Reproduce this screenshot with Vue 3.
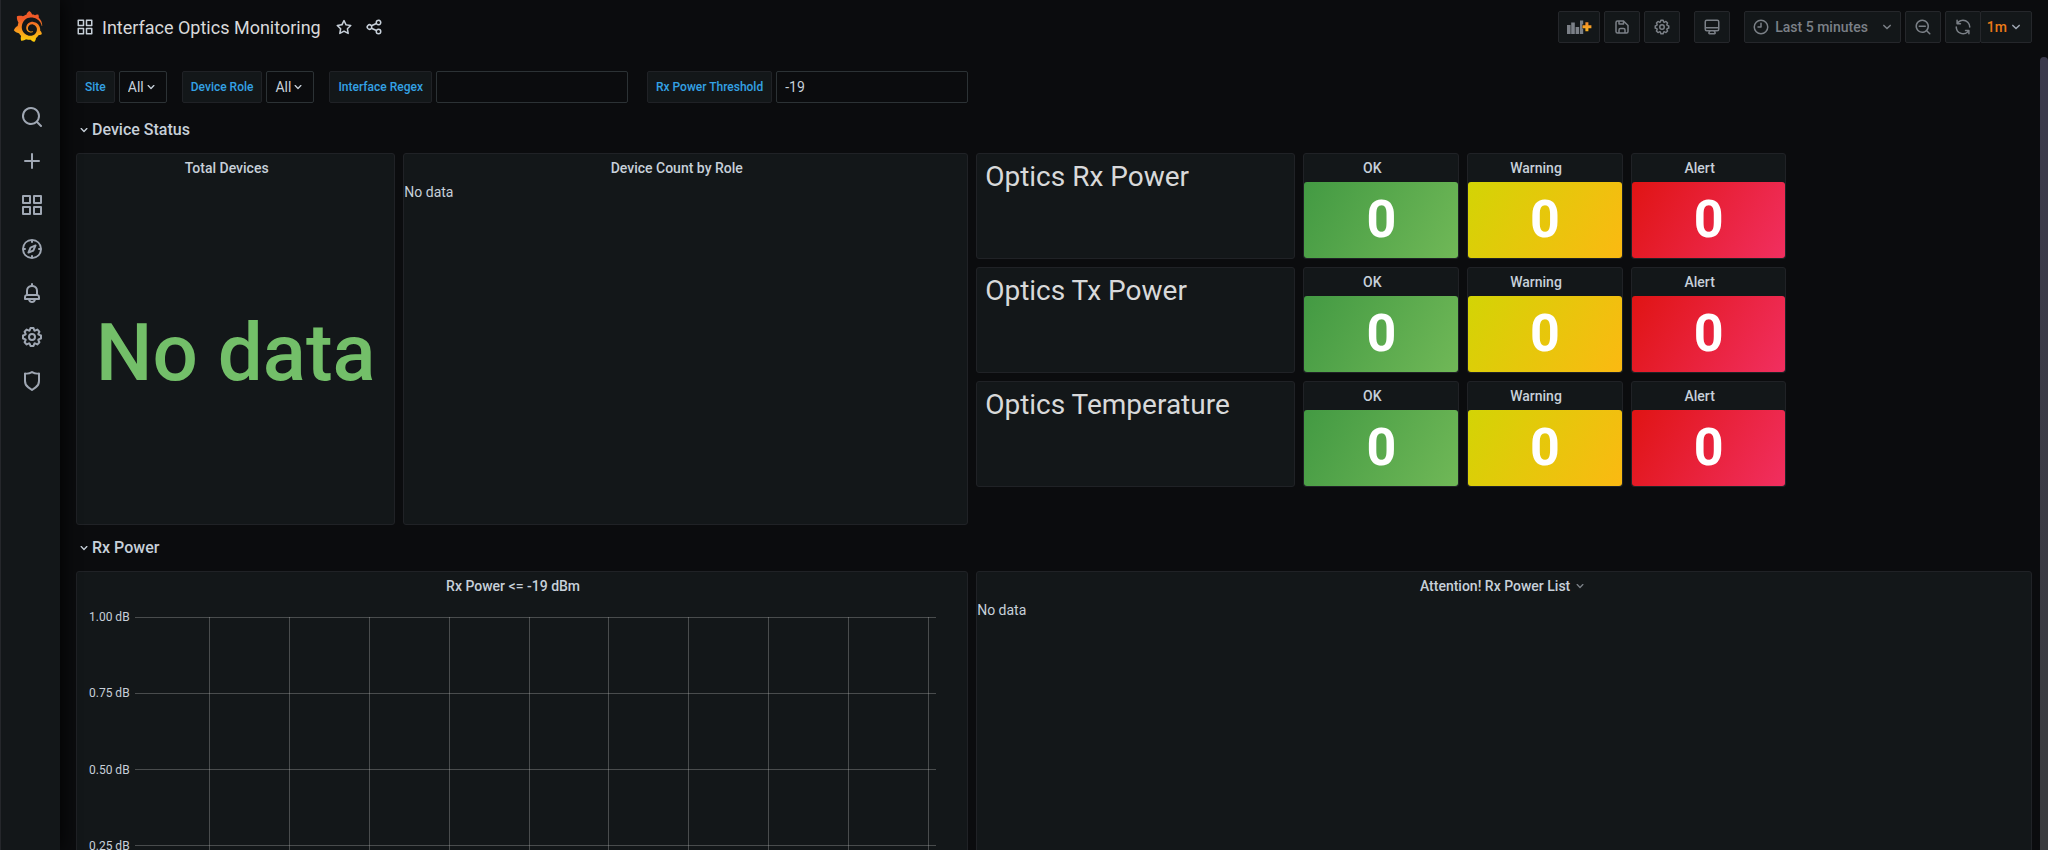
<script setup>
import { ref } from 'vue'

const icons = {
  search: 'M21.71,20.29,18,16.61A9,9,0,1,0,16.61,18l3.68,3.68a1,1,0,0,0,1.42,0A1,1,0,0,0,21.71,20.29ZM11,18a7,7,0,1,1,7-7A7,7,0,0,1,11,18Z',
  searchMinus: 'M21.71,20.29,18,16.61A9,9,0,1,0,16.61,18l3.68,3.68a1,1,0,0,0,1.42,0A1,1,0,0,0,21.71,20.29ZM11,18a7,7,0,1,1,7-7A7,7,0,0,1,11,18Zm4-8H7a1,1,0,0,0,0,2h8a1,1,0,0,0,0-2Z',
  plus: 'M19,11H13V5a1,1,0,0,0-2,0v6H5a1,1,0,0,0,0,2h6v6a1,1,0,0,0,2,0V13h6a1,1,0,0,0,0-2Z',
  apps: 'M10,13H3a1,1,0,0,0-1,1v7a1,1,0,0,0,1,1h7a1,1,0,0,0,1-1V14A1,1,0,0,0,10,13ZM9,20H4V15H9ZM21,2H14a1,1,0,0,0-1,1v7a1,1,0,0,0,1,1h7a1,1,0,0,0,1-1V3A1,1,0,0,0,21,2ZM20,9H15V4h5Zm1,4H14a1,1,0,0,0-1,1v7a1,1,0,0,0,1,1h7a1,1,0,0,0,1-1V14A1,1,0,0,0,21,13Zm-1,7H15V15h5ZM10,2H3A1,1,0,0,0,2,3v7a1,1,0,0,0,1,1h7a1,1,0,0,0,1-1V3A1,1,0,0,0,10,2ZM9,9H4V4H9Z',
  compass: 'M12,2A10,10,0,1,0,22,12,10,10,0,0,0,12,2Zm1,17.93V19a1,1,0,0,0-2,0v.93A8,8,0,0,1,4.07,13H5a1,1,0,0,0,0-2H4.07A8,8,0,0,1,11,4.07V5a1,1,0,0,0,2,0V4.07A8,8,0,0,1,19.93,11H19a1,1,0,0,0,0,2h.93A8,8,0,0,1,13,19.93ZM15.14,7.55l-5,2.12a1,1,0,0,0-.52.52l-2.12,5a1,1,0,0,0,.21,1.1,1,1,0,0,0,.7.3.93.93,0,0,0,.4-.09l5-2.12a1,1,0,0,0,.52-.52l2.12-5a1,1,0,0,0-1.31-1.31Zm-2.49,5.1-2.28,1,1-2.28,2.28-1Z',
  bell: 'M18,13.18V10a6,6,0,0,0-5-5.91V3a1,1,0,0,0-2,0V4.09A6,6,0,0,0,6,10v3.18A3,3,0,0,0,4,16v2a1,1,0,0,0,1,1H8.14a4,4,0,0,0,7.72,0H19a1,1,0,0,0,1-1V16A3,3,0,0,0,18,13.18ZM8,10a4,4,0,0,1,8,0v3H8Zm4,10a2,2,0,0,1-1.72-1h3.44A2,2,0,0,1,12,20Zm6-3H6V16a1,1,0,0,1,1-1H17a1,1,0,0,1,1,1Z',
  cog: 'M21.32,9.55l-1.89-.63.89-1.78A1,1,0,0,0,20.13,6L18,3.87a1,1,0,0,0-1.15-.19l-1.78.89-.63-1.89A1,1,0,0,0,13.5,2h-3a1,1,0,0,0-.95.68L8.92,4.57,7.14,3.68A1,1,0,0,0,6,3.87L3.87,6a1,1,0,0,0-.19,1.15l.89,1.78-1.89.63A1,1,0,0,0,2,10.5v3a1,1,0,0,0,.68.95l1.89.63-.89,1.78A1,1,0,0,0,3.87,18L6,20.13a1,1,0,0,0,1.15.19l1.78-.89.63,1.89a1,1,0,0,0,.95.68h3a1,1,0,0,0,.95-.68l.63-1.89,1.78.89A1,1,0,0,0,18,20.13L20.13,18a1,1,0,0,0,.19-1.15l-.89-1.78,1.89-.63A1,1,0,0,0,22,13.5v-3A1,1,0,0,0,21.32,9.55ZM20,12.78l-1.2.4A2,2,0,0,0,17.64,16l.57,1.14-1.1,1.1L16,17.64a2,2,0,0,0-2.79,1.16l-.4,1.2H11.22l-.4-1.2A2,2,0,0,0,8,17.64l-1.14.57-1.1-1.1L6.36,16A2,2,0,0,0,5.2,13.18L4,12.78V11.22l1.2-.4A2,2,0,0,0,6.36,8L5.79,6.89l1.1-1.1L8,6.36A2,2,0,0,0,10.82,5.2l.4-1.2h1.56l.4,1.2A2,2,0,0,0,16,6.36l1.14-.57,1.1,1.1L17.64,8a2,2,0,0,0,1.16,2.79l1.2.4ZM12,8a4,4,0,1,0,4,4A4,4,0,0,0,12,8Zm0,6a2,2,0,1,1,2-2A2,2,0,0,1,12,14Z',
  shield: 'M19.63,3.65a1,1,0,0,0-.84-.2,8,8,0,0,1-6.22-1.27,1,1,0,0,0-1.14,0A8,8,0,0,1,5.21,3.45a1,1,0,0,0-.84.2A1,1,0,0,0,4,4.43v7.45a9,9,0,0,0,3.77,7.33l3.65,2.6a1,1,0,0,0,1.16,0l3.65-2.6A9,9,0,0,0,20,11.88V4.43A1,1,0,0,0,19.63,3.65ZM18,11.88a7,7,0,0,1-2.93,5.7L12,19.77,8.93,17.58A7,7,0,0,1,6,11.88V5.58a10,10,0,0,0,6-1.39,10,10,0,0,0,6,1.39Z',
  star: 'M22,9.67A1,1,0,0,0,21.14,9l-5.69-.83L12.9,3a1,1,0,0,0-1.8,0L8.55,8.16,2.86,9a1,1,0,0,0-.81.68,1,1,0,0,0,.25,1l4.13,4-1,5.68A1,1,0,0,0,6.9,21.44L12,18.77l5.1,2.67a.93.93,0,0,0,.46.12,1,1,0,0,0,.59-.19,1,1,0,0,0,.4-1l-1-5.68,4.13-4A1,1,0,0,0,22,9.67Zm-6.15,4a1,1,0,0,0-.29.88l.72,4.2-3.76-2a1.06,1.06,0,0,0-.94,0l-3.76,2,.72-4.2a1,1,0,0,0-.29-.88l-3-3,4.21-.61a1,1,0,0,0,.76-.55L12,5.7l1.88,3.82a1,1,0,0,0,.76.55l4.21.61Z',
  share: 'M18,14a4,4,0,0,0-3.08,1.48l-5.1-2.35a3.64,3.64,0,0,0,0-2.26l5.1-2.35A4,4,0,1,0,14,6a4.17,4.17,0,0,0,.07.71L8.79,9.14a4,4,0,1,0,0,5.72l5.28,2.43A4.17,4.17,0,0,0,14,18a4,4,0,1,0,4-4ZM18,4a2,2,0,1,1-2,2A2,2,0,0,1,18,4ZM6,14a2,2,0,1,1,2-2A2,2,0,0,1,6,14Zm12,6a2,2,0,1,1,2-2A2,2,0,0,1,18,20Z',
  save: 'M20.71,9.29l-6-6a1,1,0,0,0-.32-.21A1.09,1.09,0,0,0,14,3H6A3,3,0,0,0,3,6V18a3,3,0,0,0,3,3H18a3,3,0,0,0,3-3V10A1,1,0,0,0,20.71,9.29ZM9,5h4V7H9Zm6,14H9V16a1,1,0,0,1,1-1h4a1,1,0,0,1,1,1Zm4-1a1,1,0,0,1-1,1H17V16a3,3,0,0,0-3-3H10a3,3,0,0,0-3,3v3H6a1,1,0,0,1-1-1V6A1,1,0,0,1,6,5H7V8A1,1,0,0,0,8,9h6a1,1,0,0,0,1-1V6.41l4,4Z',
  monitor: 'M19,2H5A3,3,0,0,0,2,5V15a3,3,0,0,0,3,3H7.64l-.58,1a2,2,0,0,0,0,2,2,2,0,0,0,1.75,1h6.46A2,2,0,0,0,17,21a2,2,0,0,0,0-2l-.59-1H19a3,3,0,0,0,3-3V5A3,3,0,0,0,19,2ZM8.77,20,10,18H14l1.2,2ZM20,15a1,1,0,0,1-1,1H5a1,1,0,0,1-1-1V14H20Zm0-3H4V5A1,1,0,0,1,5,4H19a1,1,0,0,1,1,1Z',
  clock: 'M12,2A10,10,0,1,0,22,12,10,10,0,0,0,12,2Zm0,18a8,8,0,1,1,8-8A8,8,0,0,1,12,20ZM12,6a1,1,0,0,0-1,1v4H8a1,1,0,0,0,0,2h4a1,1,0,0,0,1-1V7A1,1,0,0,0,12,6Z',
  sync: 'M19.91,15.51H15.38a1,1,0,0,0,0,2h2.4A8,8,0,0,1,4,12a1,1,0,0,0-2,0,10,10,0,0,0,16.88,7.23V21a1,1,0,0,0,2,0V16.5A1,1,0,0,0,19.91,15.51ZM12,2A10,10,0,0,0,5.12,4.77V3a1,1,0,0,0-2,0V7.5a1,1,0,0,0,1,1h4.5a1,1,0,0,0,0-2H6.22A8,8,0,0,1,20,12a1,1,0,0,0,2,0A10,10,0,0,0,12,2Z',
  angle: 'M17,9.17a1,1,0,0,0-1.41,0L12,12.71,8.46,9.17a1,1,0,0,0-1.41,0,1,1,0,0,0,0,1.42l4.24,4.24a1,1,0,0,0,1.42,0L17,10.59A1,1,0,0,0,17,9.17Z',
}

const nav = [
  { icon: 'search', label: 'Search' },
  { icon: 'plus', label: 'Create' },
  { icon: 'apps', label: 'Dashboards' },
  { icon: 'compass', label: 'Explore' },
  { icon: 'bell', label: 'Alerting' },
  { icon: 'cog', label: 'Configuration' },
  { icon: 'shield', label: 'Server Admin' },
]

const site = ref('All')
const role = ref('All')
const regex = ref('')
const threshold = ref('-19')

const optics = ['Optics Rx Power', 'Optics Tx Power', 'Optics Temperature']
const stats = [
  { title: 'OK', tone: 'ok' },
  { title: 'Warning', tone: 'warning' },
  { title: 'Alert', tone: 'alert' },
]

const yTicks = ['1.00 dB', '0.75 dB', '0.50 dB', '0.25 dB', '0 dB']
const xTicks = Array.from({ length: 10 }, (_, i) => `${9.3 + i * 9.98}%`)
</script>

<template>
  <div class="app">
    <aside class="sidebar">
      <a class="logo" href="#" aria-label="Home">
        <svg viewBox="0 0 351 365" aria-hidden="true">
          <defs>
            <linearGradient id="flame" gradientUnits="userSpaceOnUse" x1="175" y1="365" x2="175" y2="0">
              <stop offset="0.05" stop-color="#fbca0a" />
              <stop offset="0.3" stop-color="#f9a41b" />
              <stop offset="0.75" stop-color="#f05a28" />
              <stop offset="1" stop-color="#f05a28" />
            </linearGradient>
          </defs>
          <path fill="url(#flame)" d="M342,161.2c-0.6-6.1-1.6-13.1-3.6-20.9c-2-7.7-5-16.2-9.4-25c-4.4-8.8-10.1-17.9-17.5-26.8c-2.9-3.5-6.1-6.9-9.5-10.2c5.1-20.3-6.2-37.9-6.2-37.9c-19.5-1.2-31.9,6.1-36.5,9.4c-0.8-0.3-1.5-0.7-2.3-1c-3.3-1.3-6.7-2.6-10.3-3.7c-3.5-1.1-7.1-2.1-10.8-3c-3.7-0.9-7.4-1.6-11.2-2.2c-0.7-0.1-1.3-0.2-2-0.3c-8.5-27.2-32.9-38.6-32.9-38.6c-27.3,17.3-32.4,41.5-32.4,41.5s-0.1,0.5-0.3,1.4c-1.5,0.4-3,0.9-4.5,1.3c-2.1,0.6-4.2,1.4-6.2,2.2c-2.1,0.8-4.1,1.6-6.2,2.5c-4.1,1.8-8.2,3.8-12.2,6c-3.9,2.2-7.7,4.6-11.4,7.1c-0.5-0.2-1-0.4-1-0.4c-37.8-14.4-71.3,2.9-71.3,2.9c-3.1,40.2,15.1,65.5,18.7,70.1c-0.9,2.5-1.7,5-2.5,7.5c-2.8,9.1-4.9,18.4-6.2,28.1c-0.2,1.4-0.4,2.8-0.5,4.2C18.8,192.7,8.5,228,8.5,228c29.1,33.5,63.1,35.6,63.1,35.6c0,0,0.1-0.1,0.1-0.1c4.3,7.7,9.3,15,14.9,21.9c2.4,2.9,4.8,5.6,7.4,8.3c-10.6,30.4,1.5,55.6,1.5,55.6c32.4,1.2,53.7-14.2,58.2-17.7c3.2,1.1,6.5,2.1,9.8,2.9c10,2.6,20.2,4.1,30.4,4.5c2.5,0.1,5.1,0.2,7.6,0.1l1.2,0l0.8,0l1.6,0l1.6-0.1l0,0.1c15.3,21.8,42.1,24.9,42.1,24.9c19.1-20.1,20.2-40.1,20.2-44.4l0,0c0,0,0-0.1,0-0.3c0-0.4,0-0.6,0-0.6l0,0c0-0.3,0-0.6,0-0.9c4-2.8,7.8-5.8,11.4-9.1c7.6-6.9,14.3-14.8,19.9-23.3c0.5-0.8,1-1.6,1.5-2.4c21.6,1.2,36.9-13.4,36.9-13.4c-3.6-22.5-16.4-33.5-19.1-35.6l0,0c0,0-0.1-0.1-0.3-0.2c-0.2-0.1-0.2-0.2-0.2-0.2c0,0,0,0,0,0c-0.1-0.1-0.3-0.2-0.5-0.3c0.1-1.4,0.2-2.7,0.3-4.1c0.2-2.4,0.2-4.9,0.2-7.3l0-1.8l0-0.9l0-0.5c0-0.6,0-0.4,0-0.6l-0.1-1.5l-0.1-2c0-0.7-0.1-1.3-0.2-1.9c-0.1-0.6-0.1-1.3-0.2-1.9l-0.2-1.9l-0.3-1.9c-0.4-2.5-0.8-4.9-1.4-7.4c-2.3-9.7-6.1-18.9-11-27.2c-5-8.3-11.2-15.6-18.3-21.8c-7-6.2-14.9-11.2-23.1-14.9c-8.3-3.7-16.9-6.1-25.5-7.2c-4.3-0.6-8.6-0.8-12.9-0.7l-1.6,0l-0.4,0c-0.1,0-0.6,0-0.5,0l-0.7,0l-1.6,0.1c-0.6,0-1.2,0.1-1.7,0.1c-2.2,0.2-4.4,0.5-6.5,0.9c-8.6,1.6-16.7,4.7-23.8,9c-7.1,4.3-13.3,9.6-18.3,15.6c-5,6-8.9,12.7-11.6,19.6c-2.7,6.9-4.2,14.1-4.6,21c-0.1,1.7-0.1,3.5-0.1,5.2c0,0.4,0,0.9,0,1.3l0.1,1.4c0.1,0.8,0.1,1.7,0.2,2.5c0.3,3.5,1,6.9,1.9,10.1c1.9,6.5,4.9,12.4,8.6,17.4c3.7,5,8.2,9.1,12.9,12.4c4.7,3.2,9.8,5.5,14.8,7c5,1.5,10,2.1,14.7,2.1c0.6,0,1.2,0,1.7,0c0.3,0,0.6,0,0.9,0c0.3,0,0.6,0,0.9-0.1c0.5,0,1-0.1,1.5-0.1c0.1,0,0.3,0,0.4-0.1l0.5-0.1c0.3,0,0.6-0.1,0.9-0.1c0.6-0.1,1.1-0.2,1.7-0.3c0.6-0.1,1.1-0.2,1.6-0.4c1.1-0.2,2.1-0.6,3.1-0.9c2-0.7,4-1.5,5.7-2.4c1.8-0.9,3.4-2,5-3c0.4-0.3,0.9-0.6,1.3-1c1.6-1.3,1.9-3.7,0.6-5.3c-1.1-1.4-3.1-1.8-4.7-0.9c-0.4,0.2-0.8,0.4-1.2,0.6c-1.4,0.7-2.8,1.3-4.3,1.8c-1.5,0.5-3.1,0.9-4.7,1.2c-0.8,0.1-1.6,0.2-2.5,0.3c-0.4,0-0.8,0.1-1.3,0.1c-0.4,0-0.9,0-1.2,0c-0.4,0-0.8,0-1.2,0c-0.5,0-1,0-1.5-0.1c0,0-0.3,0-0.1,0l-0.2,0l-0.3,0c-0.2,0-0.5,0-0.7-0.1c-0.5-0.1-0.9-0.1-1.4-0.2c-3.7-0.5-7.4-1.6-10.9-3.2c-3.6-1.6-7-3.8-10.1-6.6c-3.1-2.8-5.8-6.1-7.9-9.9c-2.1-3.8-3.6-8-4.3-12.4c-0.3-2.2-0.5-4.5-0.4-6.7c0-0.6,0.1-1.2,0.1-1.8c0,0.2,0-0.1,0-0.1l0-0.2l0-0.5c0-0.3,0.1-0.6,0.1-0.9c0.1-1.2,0.3-2.4,0.5-3.6c1.7-9.6,6.5-19,13.9-26.1c1.9-1.8,3.9-3.4,6-4.9c2.1-1.5,4.4-2.8,6.8-3.9c2.4-1.1,4.8-2,7.4-2.7c2.5-0.7,5.1-1.1,7.8-1.4c1.3-0.1,2.6-0.2,4-0.2c0.4,0,0.6,0,0.9,0l1.1,0l0.7,0c0.3,0,0,0,0.1,0l0.3,0l1.1,0.1c2.9,0.2,5.7,0.6,8.5,1.3c5.6,1.2,11.1,3.3,16.2,6.1c10.2,5.7,18.9,14.5,24.2,25.1c2.7,5.3,4.6,11,5.5,16.9c0.2,1.5,0.4,3,0.5,4.5l0.1,1.1l0.1,1.1c0,0.4,0,0.8,0,1.1c0,0.4,0,0.8,0,1.1l0,1l0,1.1c0,0.7-0.1,1.9-0.1,2.6c-0.1,1.6-0.3,3.3-0.5,4.9c-0.2,1.6-0.5,3.2-0.8,4.8c-0.3,1.6-0.7,3.2-1.1,4.7c-0.8,3.1-1.8,6.2-3,9.3c-2.4,6-5.6,11.8-9.4,17.1c-7.7,10.6-18.2,19.2-30.2,24.7c-6,2.7-12.3,4.7-18.8,5.7c-3.2,0.6-6.5,0.9-9.8,1l-0.6,0l-0.5,0l-1.1,0l-1.6,0l-0.8,0c0.4,0-0.1,0-0.1,0l-0.3,0c-1.8,0-3.5-0.1-5.3-0.3c-7-0.5-13.9-1.8-20.7-3.7c-6.7-1.9-13.2-4.6-19.4-7.8c-12.3-6.6-23.4-15.6-32-26.5c-4.3-5.4-8.1-11.3-11.2-17.4c-3.1-6.1-5.6-12.6-7.4-19.1c-1.8-6.6-2.9-13.3-3.4-20.1l-0.1-1.3l0-0.3l0-0.3l0-0.6l0-1.1l0-0.3l0-0.4l0-0.8l0-1.6l0-0.3c0,0,0,0.1,0-0.1l0-0.6c0-0.8,0-1.7,0-2.5c0.1-3.3,0.4-6.8,0.8-10.2c0.4-3.4,1-6.9,1.7-10.3c0.7-3.4,1.5-6.8,2.5-10.2c1.9-6.7,4.3-13.2,7.1-19.3c5.7-12.2,13.1-23.1,22-31.8c2.2-2.2,4.5-4.2,6.9-6.2c2.4-1.9,4.9-3.7,7.5-5.4c2.5-1.7,5.2-3.2,7.9-4.6c1.3-0.7,2.7-1.4,4.1-2c0.7-0.3,1.4-0.6,2.1-0.9c0.7-0.3,1.4-0.6,2.1-0.9c2.8-1.2,5.7-2.2,8.7-3.1c0.7-0.2,1.5-0.4,2.2-0.7c0.7-0.2,1.5-0.4,2.2-0.6c1.5-0.4,3-0.8,4.5-1.1c0.7-0.2,1.5-0.3,2.3-0.5c0.8-0.2,1.5-0.3,2.3-0.5c0.8-0.1,1.5-0.3,2.3-0.4l1.1-0.2l1.2-0.2c0.8-0.1,1.5-0.2,2.3-0.3c0.9-0.1,1.7-0.2,2.6-0.3c0.7-0.1,1.9-0.2,2.6-0.3c0.5-0.1,1.1-0.1,1.6-0.2l1.1-0.1l0.5-0.1l0.6,0c0.9-0.1,1.7-0.1,2.6-0.2l1.3-0.1c0,0,0.5,0,0.1,0l0.3,0l0.6,0c0.7,0,1.5-0.1,2.2-0.1c2.9-0.1,5.9-0.1,8.8,0c5.8,0.2,11.5,0.9,17,1.9c11.1,2.1,21.5,5.6,31,10.3c9.5,4.6,17.9,10.3,25.3,16.5c0.5,0.4,0.9,0.8,1.4,1.2c0.4,0.4,0.9,0.8,1.3,1.2c0.9,0.8,1.7,1.6,2.6,2.4c0.9,0.8,1.7,1.6,2.5,2.4c0.8,0.8,1.6,1.6,2.4,2.5c3.1,3.3,6,6.6,8.6,10c5.2,6.7,9.4,13.5,12.7,19.9c0.2,0.4,0.4,0.8,0.6,1.2c0.2,0.4,0.4,0.8,0.6,1.2c0.4,0.8,0.8,1.6,1.1,2.4c0.4,0.8,0.7,1.5,1.1,2.3c0.3,0.8,0.7,1.5,1,2.3c1.2,3,2.4,5.9,3.3,8.6c1.5,4.4,2.6,8.3,3.5,11.7c0.3,1.4,1.6,2.3,3,2.1c1.5-0.1,2.6-1.3,2.6-2.8C342.6,170.4,342.5,166.1,342,161.2z" />
        </svg>
      </a>
      <nav class="nav" aria-label="Main">
        <a v-for="item in nav" :key="item.icon" class="nav-link" href="#" :aria-label="item.label">
          <svg class="icon icon-lg" viewBox="0 0 24 24" aria-hidden="true"><path :d="icons[item.icon]" /></svg>
        </a>
      </nav>
    </aside>

    <main class="main">
      <header class="toolbar">
        <svg class="icon icon-md bright" viewBox="0 0 24 24" aria-hidden="true"><path :d="icons.apps" /></svg>
        <h1 class="title">Interface Optics Monitoring</h1>
        <button class="plain" type="button" aria-label="Mark as favorite">
          <svg class="icon icon-md bright" viewBox="0 0 24 24" aria-hidden="true"><path :d="icons.star" /></svg>
        </button>
        <button class="plain" type="button" aria-label="Share dashboard">
          <svg class="icon icon-md bright" viewBox="0 0 24 24" aria-hidden="true"><path :d="icons.share" /></svg>
        </button>

        <div class="actions">
          <div class="group">
            <button class="btn" type="button" aria-label="Add panel">
              <svg class="add-panel" viewBox="0 0 24 14" aria-hidden="true">
                <defs>
                  <linearGradient id="amber" x1="0" y1="0" x2="0" y2="1">
                    <stop offset="0" stop-color="#f2882c" />
                    <stop offset="1" stop-color="#fbb51f" />
                  </linearGradient>
                </defs>
                <path class="bars" d="M0 5h3.6v9H0zM4.2 2.6h3.6V14H4.2zM8.6 7h3.6v7H8.6zM13 .4h3.2V14H13z" />
                <path class="halo" d="M18 1.6h4v3h2.6v4H22v3h-4v-3h-3v-4h3z" />
                <path fill="url(#amber)" d="M18.4 2.2h3v3h3v3h-3v3h-3v-3h-3v-3h3z" />
              </svg>
            </button>
            <button class="btn" type="button" aria-label="Save dashboard">
              <svg class="icon icon-md" viewBox="0 0 24 24" aria-hidden="true"><path :d="icons.save" /></svg>
            </button>
            <button class="btn" type="button" aria-label="Dashboard settings">
              <svg class="icon icon-md" viewBox="0 0 24 24" aria-hidden="true"><path :d="icons.cog" /></svg>
            </button>
          </div>
          <button class="btn" type="button" aria-label="Cycle view mode">
            <svg class="icon icon-md" viewBox="0 0 24 24" aria-hidden="true"><path :d="icons.monitor" /></svg>
          </button>
          <div class="group">
            <button class="btn time" type="button">
              <svg class="icon icon-md" viewBox="0 0 24 24" aria-hidden="true"><path :d="icons.clock" /></svg>
              <span class="time-text">Last 5 minutes</span>
              <svg class="icon icon-md" viewBox="0 0 24 24" aria-hidden="true"><path :d="icons.angle" /></svg>
            </button>
            <button class="btn" type="button" aria-label="Zoom out time range">
              <svg class="icon icon-md" viewBox="0 0 24 24" aria-hidden="true"><path :d="icons.searchMinus" /></svg>
            </button>
            <div class="joined">
              <button class="btn" type="button" aria-label="Refresh dashboard">
                <svg class="icon icon-md" viewBox="0 0 24 24" aria-hidden="true"><path :d="icons.sync" /></svg>
              </button>
              <button class="btn interval" type="button">
                1m
                <svg class="icon icon-md" viewBox="0 0 24 24" aria-hidden="true"><path :d="icons.angle" /></svg>
              </button>
            </div>
          </div>
        </div>
      </header>

      <form class="filters" @submit.prevent>
        <div class="filter">
          <label class="filter-label" for="var-site">Site</label>
          <span class="select">
            <select id="var-site" v-model="site"><option>All</option></select>
            <svg class="icon icon-sm" viewBox="0 0 24 24" aria-hidden="true"><path :d="icons.angle" /></svg>
          </span>
        </div>
        <div class="filter">
          <label class="filter-label" for="var-role">Device Role</label>
          <span class="select">
            <select id="var-role" v-model="role"><option>All</option></select>
            <svg class="icon icon-sm" viewBox="0 0 24 24" aria-hidden="true"><path :d="icons.angle" /></svg>
          </span>
        </div>
        <div class="filter wide">
          <label class="filter-label" for="var-regex">Interface Regex</label>
          <input id="var-regex" v-model="regex" class="field" type="text" />
        </div>
        <div class="filter wide">
          <label class="filter-label" for="var-threshold">Rx Power Threshold</label>
          <input id="var-threshold" v-model="threshold" class="field" type="text" />
        </div>
      </form>

      <div class="dashboard">
        <button class="row-title" type="button">
          <svg class="icon icon-sm" viewBox="0 0 24 24" aria-hidden="true"><path :d="icons.angle" /></svg>
          Device Status
        </button>

        <section class="panel total">
          <h2 class="panel-title"><span>Total Devices</span></h2>
          <div class="big-value">No data</div>
        </section>

        <section class="panel by-role">
          <h2 class="panel-title"><span>Device Count by Role</span></h2>
          <p class="empty">No data</p>
        </section>

        <div class="optics">
          <template v-for="name in optics" :key="name">
            <section class="panel optic-name"><h2>{{ name }}</h2></section>
            <section v-for="stat in stats" :key="stat.title" class="panel stat">
              <h3 class="panel-title"><span>{{ stat.title }}</span></h3>
              <div class="stat-value" :class="stat.tone">0</div>
            </section>
          </template>
        </div>

        <button class="row-title" type="button">
          <svg class="icon icon-sm" viewBox="0 0 24 24" aria-hidden="true"><path :d="icons.angle" /></svg>
          Rx Power
        </button>

        <section class="panel graph">
          <h2 class="panel-title"><span>Rx Power &lt;= -19 dBm</span></h2>
          <div class="chart">
            <div class="y-axis"><span v-for="t in yTicks" :key="t">{{ t }}</span></div>
            <svg class="plot" aria-hidden="true">
              <line v-for="i in 5" :key="'h' + i" x1="0" x2="100%" :y1="`${(i - 1) * 25}%`" :y2="`${(i - 1) * 25}%`" />
              <line v-for="x in xTicks" :key="x" :x1="x" :x2="x" y1="0" y2="100%" />
            </svg>
          </div>
        </section>

        <section class="panel attention">
          <h2 class="panel-title">
            <span>Attention! Rx Power List</span>
            <svg class="icon icon-sm" viewBox="0 0 24 24" aria-hidden="true"><path :d="icons.angle" /></svg>
          </h2>
          <p class="empty">No data</p>
        </section>
      </div>
      <div class="scroll-thumb"></div>
    </main>
  </div>
</template>

<style>
body {
  background: #0b0c0e;
}
</style>

<style scoped>
.app,
.app *,
.app *::after {
  box-sizing: border-box;
}

.app {
  display: flex;
  height: 100vh;
  overflow: hidden;
  background: #0b0c0e;
  color: #c7d0d9;
  font-family: Roboto, "Liberation Sans", sans-serif;
  font-size: 14px;
  line-height: 20px;
}

h1, h2, h3, p {
  margin: 0;
}

button, input, select {
  font: inherit;
  color: inherit;
}

.icon {
  display: block;
  flex: none;
  fill: currentColor;
}
.icon-sm { width: 16px; height: 16px; }
.icon-md { width: 18px; height: 18px; }
.icon-lg { width: 24px; height: 24px; }
.bright { color: #c7d0d9; }

.sidebar {
  z-index: 1;
  flex: none;
  width: 60px;
  border-left: 1px solid #25272b;
  background: #131719;
  box-shadow: 0 0 20px #000;
  color: #9fa7b3;
}
.logo {
  display: block;
  padding: 11px 0 0 12px;
}
.logo svg {
  display: block;
  width: 30px;
  height: 31px;
}
.nav {
  display: flex;
  flex-direction: column;
  margin-top: 53px;
}
.nav-link {
  display: flex;
  align-items: center;
  justify-content: center;
  height: 44px;
  padding-left: 2px;
  color: inherit;
}

.main {
  position: relative;
  flex: 1;
  min-width: 0;
  padding: 0 16px;
  overflow: hidden;
}
.scroll-thumb {
  position: absolute;
  top: 57px;
  right: 0;
  bottom: 0;
  width: 8px;
  border-radius: 4px 4px 0 0;
  background: linear-gradient(#3b3a4c, #3a3b3e);
}

.toolbar {
  display: flex;
  align-items: center;
  padding: 11px 0 28px;
}
.title {
  margin: 0 14px 0 8px;
  padding-top: 2px;
  color: #d8d9da;
  font-size: 18px;
  font-weight: 400;
  line-height: 30px;
}
.plain {
  margin-right: 12px;
  padding: 0;
  border: 0;
  background: none;
}
.actions {
  display: flex;
  gap: 14px;
  margin-left: auto;
  color: #7b8087;
}
.group {
  display: flex;
  gap: 4px;
}
.joined {
  display: flex;
}
.btn {
  display: flex;
  align-items: center;
  height: 32px;
  padding: 0 8px;
  border: 1px solid #25272b;
  border-radius: 2px;
  background: #131719;
  font-weight: 500;
}
.joined .btn + .btn {
  margin-left: -1px;
}
.add-panel {
  width: 24px;
  height: 14px;
  overflow: visible;
}
.bars { fill: #7b8087; }
.halo { fill: #131719; }
.btn.time {
  padding: 0 4px 0 7px;
}
.time-text {
  margin: 0 10px 0 5px;
}
.interval {
  padding: 0 6px;
  color: #eb7b18;
}
.interval .icon {
  color: #9fa7b3;
}

.filters {
  display: flex;
  gap: 15px;
  margin-bottom: 12px;
}
.filter {
  display: flex;
  gap: 4px;
}
.wide + .wide {
  margin-left: 4px;
}
.filter-label {
  height: 32px;
  padding: 0 8px;
  border: 1px solid #202226;
  border-radius: 2px;
  background: #131719;
  color: #33a2e5;
  font-size: 12px;
  font-weight: 500;
  line-height: 30px;
}
.select {
  display: grid;
  align-items: center;
}
.select > * {
  grid-area: 1 / 1;
}
.select .icon {
  justify-self: end;
  margin-right: 8px;
  pointer-events: none;
}
select {
  width: 48px;
  height: 32px;
  padding: 0 8px;
  border: 1px solid #2c3235;
  border-radius: 2px;
  appearance: none;
  background: #0b0c0e;
}
.field {
  width: 192px;
  height: 32px;
  padding: 0 8px;
  border: 1px solid #2c3235;
  border-radius: 2px;
  background: #0b0c0e;
}

.dashboard {
  display: grid;
  grid-template-columns: repeat(24, minmax(0, 1fr));
  grid-auto-rows: 30px;
  gap: 8px;
}
.row-title {
  display: flex;
  grid-column: 1 / -1;
  align-items: center;
  padding: 0;
  border: 0;
  background: none;
  font-size: 16px;
  font-weight: 500;
}
.panel {
  display: flex;
  flex-direction: column;
  min-width: 0;
  border: 1px solid #202226;
  border-radius: 3px;
  background: #131719;
}
.panel-title {
  display: flex;
  align-items: center;
  justify-content: center;
  height: 28px;
  padding-right: 18px;
  font-size: 14px;
  font-weight: 500;
}
.attention .panel-title {
  gap: 2px;
  padding-right: 0;
}
.attention .icon {
  color: #7b8087;
}
.total { grid-column: span 4; grid-row: span 10; }
.by-role { grid-column: span 7; grid-row: span 10; }
.optics {
  display: grid;
  grid-column: span 10;
  grid-row: span 10;
  grid-template-columns: repeat(10, minmax(0, 1fr));
  grid-auto-rows: 106px;
  gap: 8px;
}
.optic-name { grid-column: span 4; padding: 0 8px; }
.stat { grid-column: span 2; }
.graph { grid-column: span 11; grid-row: span 12; }
.attention { grid-column: span 13; grid-row: span 12; }

.big-value {
  display: flex;
  flex: 1;
  align-items: center;
  justify-content: center;
  color: #73bf69;
  font-size: 80px;
  font-weight: 500;
  line-height: 80px;
  white-space: nowrap;
}
.empty {
  line-height: 20px;
}
.optic-name h2 {
  color: #d8d9da;
  font-size: 28px;
  font-weight: 400;
  line-height: 46px;
}
.stat-value {
  display: flex;
  flex: 1;
  align-items: center;
  justify-content: center;
  border-radius: 3px;
  color: #fff;
  font-size: 52px;
  font-weight: 700;
  line-height: 52px;
}
.ok { background: linear-gradient(120deg, #439a43, #70b857); }
.warning { background: linear-gradient(120deg, #d3d405, #fbb912); }
.alert { background: linear-gradient(120deg, #e01414, #f12f60); }

.chart {
  display: flex;
  flex: none;
  gap: 5px;
  height: 321px;
  margin: 9px 32px 0 12px;
}
.y-axis {
  display: flex;
  flex-direction: column;
  justify-content: space-between;
  font-size: 12px;
  line-height: 16px;
  text-align: right;
}
.plot {
  flex: 1;
  min-width: 0;
  height: 305px;
  margin: 8px 0;
  overflow: visible;
}
.plot line {
  stroke: #c8c8c8;
  stroke-opacity: 0.3;
  shape-rendering: crispEdges;
}
</style>
